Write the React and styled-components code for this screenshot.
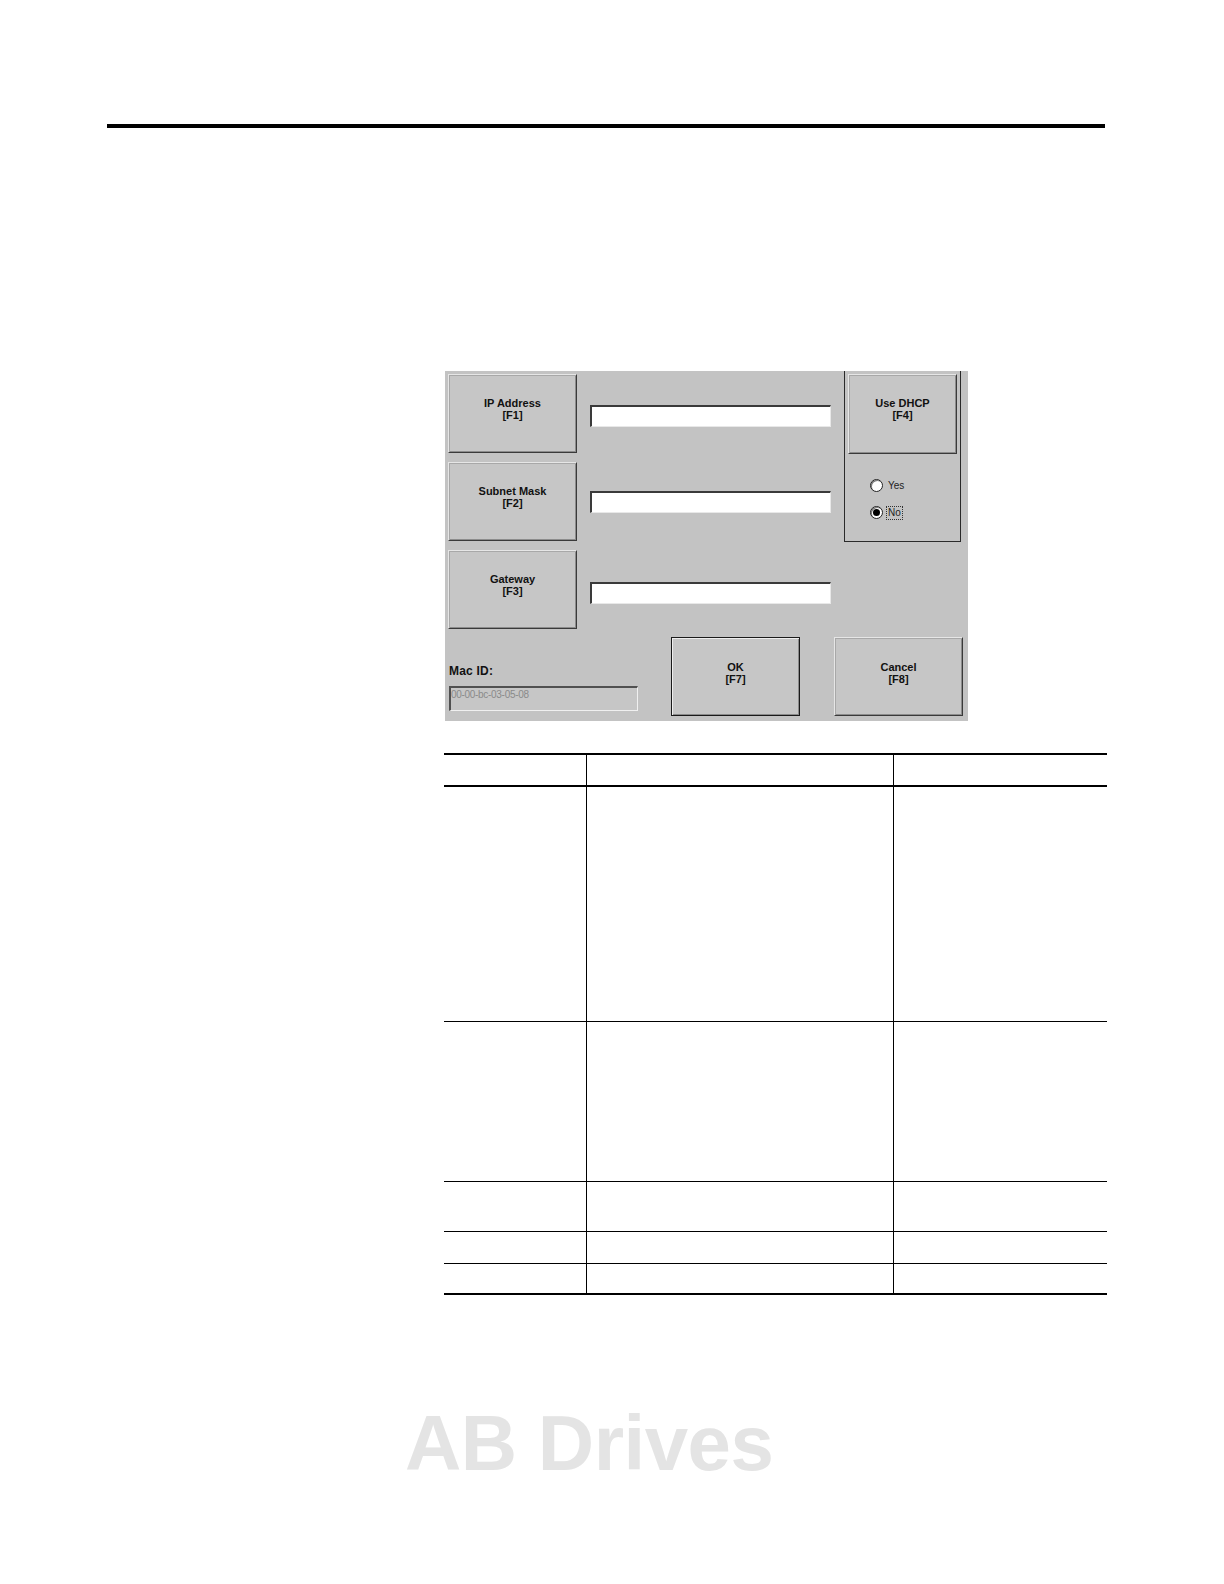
import React from "react";
import styled, { createGlobalStyle, css } from "styled-components";

const Global = createGlobalStyle`
  html, body { margin: 0; padding: 0; background: #ffffff; overflow: hidden; }
  body { font-family: "Liberation Sans", Arial, sans-serif; }
`;

const Page = styled.div`
  width: 100%;
  height: 1584px;
  overflow: hidden;
  display: flex;
  flex-direction: column;
  box-sizing: border-box;
  padding-top: 124px;
`;

const TopRule = styled.div`
  margin-left: 107px;
  width: 998px;
  height: 4px;
  background: #000;
`;

const Dialog = styled.div`
  margin-top: 243px;
  margin-left: 445px;
  width: 523px;
  height: 350px;
  box-sizing: border-box;
  background: #c3c3c3;
  padding: 0 7px 0 3px;
  display: flex;
  flex-direction: column;
  font-family: "Liberation Sans", Arial, sans-serif;
`;

const TopArea = styled.div`
  display: flex;
  height: 259px;
`;

const LeftCol = styled.div`
  display: flex;
  flex-direction: column;
  gap: 9px;
  padding-top: 3px;
`;

const FieldRow = styled.div`
  display: flex;
  align-items: center;
  height: 79px;
`;

const KeyButton = styled.div`
  width: ${(p) => p.$w || 129}px;
  height: ${(p) => p.$h || 79}px;
  flex: none;
  box-sizing: border-box;
  background: #c6c6c6;
  display: flex;
  flex-direction: column;
  align-items: center;
  justify-content: center;
  font-size: 11px;
  font-weight: bold;
  line-height: 12px;
  color: #111;
  padding-bottom: ${(p) => p.$pb ?? 10}px;
  ${(p) =>
    p.$default
      ? css`
          border: 1px solid #1a1a1a;
          box-shadow: inset 1px 1px #eeeeee, inset -1px -1px #8a8a8a;
        `
      : css`
          border-top: 1px solid #e6e6e6;
          border-left: 1px solid #e6e6e6;
          border-right: 1px solid #3a3a3a;
          border-bottom: 1px solid #3a3a3a;
          box-shadow: inset 1px 1px #a8a8a8, inset -1px -1px #8c8c8c;
        `}
`;

const TextField = styled.div`
  margin-left: 13px;
  margin-top: ${(p) => p.$dy || 0}px;
  width: 241px;
  height: 22px;
  box-sizing: border-box;
  background: #ffffff;
  border-top: 2px solid #3a3a3a;
  border-left: 2px solid #3a3a3a;
  border-right: 1px solid #e8e8e8;
  border-bottom: 1px solid #e8e8e8;
`;

const GroupBox = styled.div`
  margin-left: 13px;
  width: 117px;
  height: 171px;
  box-sizing: border-box;
  border-left: 1px solid #2a2a2a;
  border-right: 1px solid #2a2a2a;
  border-bottom: 1px solid #2a2a2a;
  padding: 3px 0 0 3px;
  display: flex;
  flex-direction: column;
`;

const RadioList = styled.div`
  display: flex;
  flex-direction: column;
  gap: 14px;
  margin-top: 25px;
  margin-left: 22px;
`;

const RadioRow = styled.div`
  display: flex;
  align-items: center;
  gap: 4px;
  height: 13px;
  font-size: 10px;
  color: #222;
`;

const RadioDot = styled.span`
  width: 13px;
  height: 13px;
  box-sizing: border-box;
  border-radius: 50%;
  background: #fff;
  border: 1px solid #222;
  box-shadow: inset 1px 1px #7a7a7a;
  display: flex;
  align-items: center;
  justify-content: center;
  &::after {
    content: "";
    width: 7px;
    height: 7px;
    border-radius: 50%;
    background: ${(p) => (p.$checked ? "#000" : "transparent")};
  }
`;

const RadioLabel = styled.span`
  padding: 0 1px;
  line-height: 12px;
  outline: ${(p) => (p.$focus ? "1px dotted #333" : "none")};
`;

const BottomArea = styled.div`
  display: flex;
  margin-top: 7px;
  height: 78px;
`;

const MacBlock = styled.div`
  margin-left: 1px;
  width: 189px;
  display: flex;
  flex-direction: column;
  padding-top: 27px;
`;

const MacLabel = styled.div`
  font-size: 12px;
  font-weight: bold;
  color: #111;
  line-height: 14px;
  letter-spacing: 0.2px;
`;

const MacField = styled.div`
  margin-top: 8px;
  width: 189px;
  height: 25px;
  box-sizing: border-box;
  background: #c6c6c6;
  border-top: 2px solid #505050;
  border-left: 2px solid #505050;
  border-right: 1px solid #f0f0f0;
  border-bottom: 1px solid #f0f0f0;
  font-size: 10px;
  color: #8a8a8a;
  padding: 1px 0 0 0;
  line-height: 12px;
  letter-spacing: -0.3px;
`;

const BottomButtons = styled.div`
  display: flex;
  gap: 34px;
  margin-left: 33px;
`;

const Table = styled.div`
  margin-top: 32px;
  margin-left: 444px;
  width: 663px;
  display: flex;
  flex-direction: column;
  border-top: 2px solid #000;
  border-bottom: 2px solid #000;
`;

const TRow = styled.div`
  display: grid;
  grid-template-columns: 142px 307px 214px;
  height: ${(p) => p.$h}px;
  box-sizing: border-box;
  border-bottom: ${(p) => (p.$last ? "none" : p.$head ? "2px solid #000" : "1px solid #000")};
`;

const TCell = styled.div`
  border-left: ${(p) => (p.$first ? "none" : "1px solid #000")};
`;

const Watermark = styled.div`
  margin-top: 109px;
  margin-left: 405px;
  font-family: "Liberation Sans", Arial, sans-serif;
  font-weight: bold;
  font-size: 78px;
  line-height: 78px;
  color: #e4e4e4;
  letter-spacing: -0.5px;
`;

const rows = [
  { h: 32, head: true },
  { h: 235 },
  { h: 160 },
  { h: 50 },
  { h: 32 },
  { h: 29, last: true },
];

export default function App() {
  return (
    <>
      <Global />
      <Page>
        <TopRule />
        <Dialog>
          <TopArea>
            <LeftCol>
              <FieldRow>
                <KeyButton>
                  <span>IP Address</span>
                  <span>[F1]</span>
                </KeyButton>
                <TextField $dy={5} />
              </FieldRow>
              <FieldRow>
                <KeyButton>
                  <span>Subnet Mask</span>
                  <span>[F2]</span>
                </KeyButton>
                <TextField />
              </FieldRow>
              <FieldRow>
                <KeyButton>
                  <span>Gateway</span>
                  <span>[F3]</span>
                </KeyButton>
                <TextField $dy={6} />
              </FieldRow>
            </LeftCol>
            <GroupBox>
              <KeyButton $w={109} $h={80}>
                <span>Use DHCP</span>
                <span>[F4]</span>
              </KeyButton>
              <RadioList>
                <RadioRow>
                  <RadioDot />
                  <RadioLabel>Yes</RadioLabel>
                </RadioRow>
                <RadioRow>
                  <RadioDot $checked />
                  <RadioLabel $focus>No</RadioLabel>
                </RadioRow>
              </RadioList>
            </GroupBox>
          </TopArea>
          <BottomArea>
            <MacBlock>
              <MacLabel>Mac ID:</MacLabel>
              <MacField>00-00-bc-03-05-08</MacField>
            </MacBlock>
            <BottomButtons>
              <KeyButton $default $w={129} $h={79} $pb={8}>
                <span>OK</span>
                <span>[F7]</span>
              </KeyButton>
              <KeyButton $w={129} $h={79} $pb={8}>
                <span>Cancel</span>
                <span>[F8]</span>
              </KeyButton>
            </BottomButtons>
          </BottomArea>
        </Dialog>
        <Table>
          {rows.map((r, i) => (
            <TRow key={i} $h={r.h} $head={r.head} $last={r.last}>
              <TCell $first />
              <TCell />
              <TCell />
            </TRow>
          ))}
        </Table>
        <Watermark>AB Drives</Watermark>
      </Page>
    </>
  );
}
